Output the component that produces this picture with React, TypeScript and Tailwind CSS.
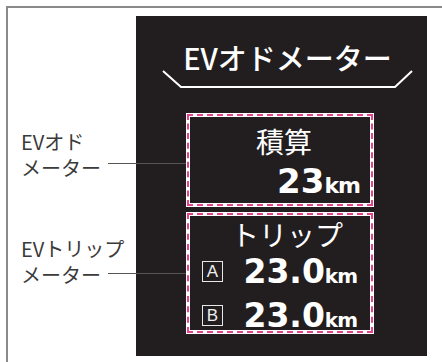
const jp = { fontFamily: '"Noto Sans CJK JP", "Noto Sans", sans-serif' };
const num = { fontFamily: '"DejaVu Sans", "Liberation Sans", sans-serif' };

function DashedBox({ className, children }: { className: string; children: React.ReactNode }) {
  return (
    <div className={`bg-white p-px ${className}`}>
      <div className="h-full border-2 border-dashed border-[#e2458c] bg-white p-px">
        <div className="h-full bg-[#221e1f]">{children}</div>
      </div>
    </div>
  );
}

function Letter({ ch }: { ch: string }) {
  return (
    <span
      className="flex h-[21px] w-[21px] shrink-0 items-center justify-center border-[1.5px] border-[#e8e8e8] text-[17px] leading-none text-[#eeeeee]"
      style={{ fontFamily: '"Liberation Sans", sans-serif' }}
    >
      {ch}
    </span>
  );
}

function TripRow({ ch }: { ch: string }) {
  return (
    <div className="flex items-center justify-between pl-[12px] pr-[13px]">
      <Letter ch={ch} />
      <span className="flex items-baseline text-white" style={num}>
        <span className="text-[33px] font-bold leading-none">23.0</span>
        <span className="text-[20px] font-bold leading-none tracking-[-1px]">km</span>
      </span>
    </div>
  );
}

export default function App() {
  return (
    <div className="h-[362px] w-[442px] overflow-hidden bg-white pl-[6px] pt-[6px]">
      <div className="relative flex h-full border-l-2 border-t-2 border-[#8a8a8a]">
        {/* ラベル */}
        <div className="flex w-[128px] shrink-0 flex-col pl-[13px] pt-[121px] text-[20px] leading-[26px] text-[#3a3a3a]" style={jp}>
          <div>
            EVオド
            <br />
            メーター
          </div>
          <div className="mt-[55px]">
            EVトリップ
            <br />
            メーター
          </div>
        </div>

        {/* 表示パネル */}
        <div className="mt-[8px] flex h-[340px] w-[291px] shrink-0 flex-col items-start bg-[#221e1f] pl-[26px] pt-[27px]">
          <div className="w-[251px] text-center text-[29px] font-medium leading-none text-white" style={jp}>
            EVオドメーター
          </div>
          <svg className="-mt-[2px]" width="251" height="19" viewBox="0 0 251 19">
            <path d="M1 1 L19 17 H233 L250 1" fill="none" stroke="white" strokeWidth="2" />
          </svg>

          <DashedBox className="ml-[24px] mt-[24px] h-[94px] w-[188px]">
            <div className="flex h-full flex-col pt-[10px]">
              <div className="pl-[8px] text-center text-[28px] leading-none text-white" style={jp}>
                積算
              </div>
              <div className="mt-[9px] flex items-baseline justify-end pr-[10px] text-white" style={num}>
                <span className="text-[34px] font-bold leading-none">23</span>
                <span className="text-[22px] font-bold leading-none tracking-[-1px]">km</span>
              </div>
            </div>
          </DashedBox>

          <DashedBox className="ml-[24px] mt-[5px] h-[122px] w-[188px]">
            <div className="flex h-full flex-col pt-[4px]">
              <div className="pl-[14px] text-center text-[28px] leading-none text-white" style={jp}>
                トリップ
              </div>
              <div className="mt-[7px] flex flex-col gap-[11px]">
                <TripRow ch="A" />
                <TripRow ch="B" />
              </div>
            </div>
          </DashedBox>
        </div>

        {/* 引き出し線 */}
        <div className="absolute left-[100px] top-[155px] h-px w-[78px] bg-[#555]" />
        <div className="absolute left-[100px] top-[265px] h-px w-[78px] bg-[#555]" />
      </div>
    </div>
  );
}
